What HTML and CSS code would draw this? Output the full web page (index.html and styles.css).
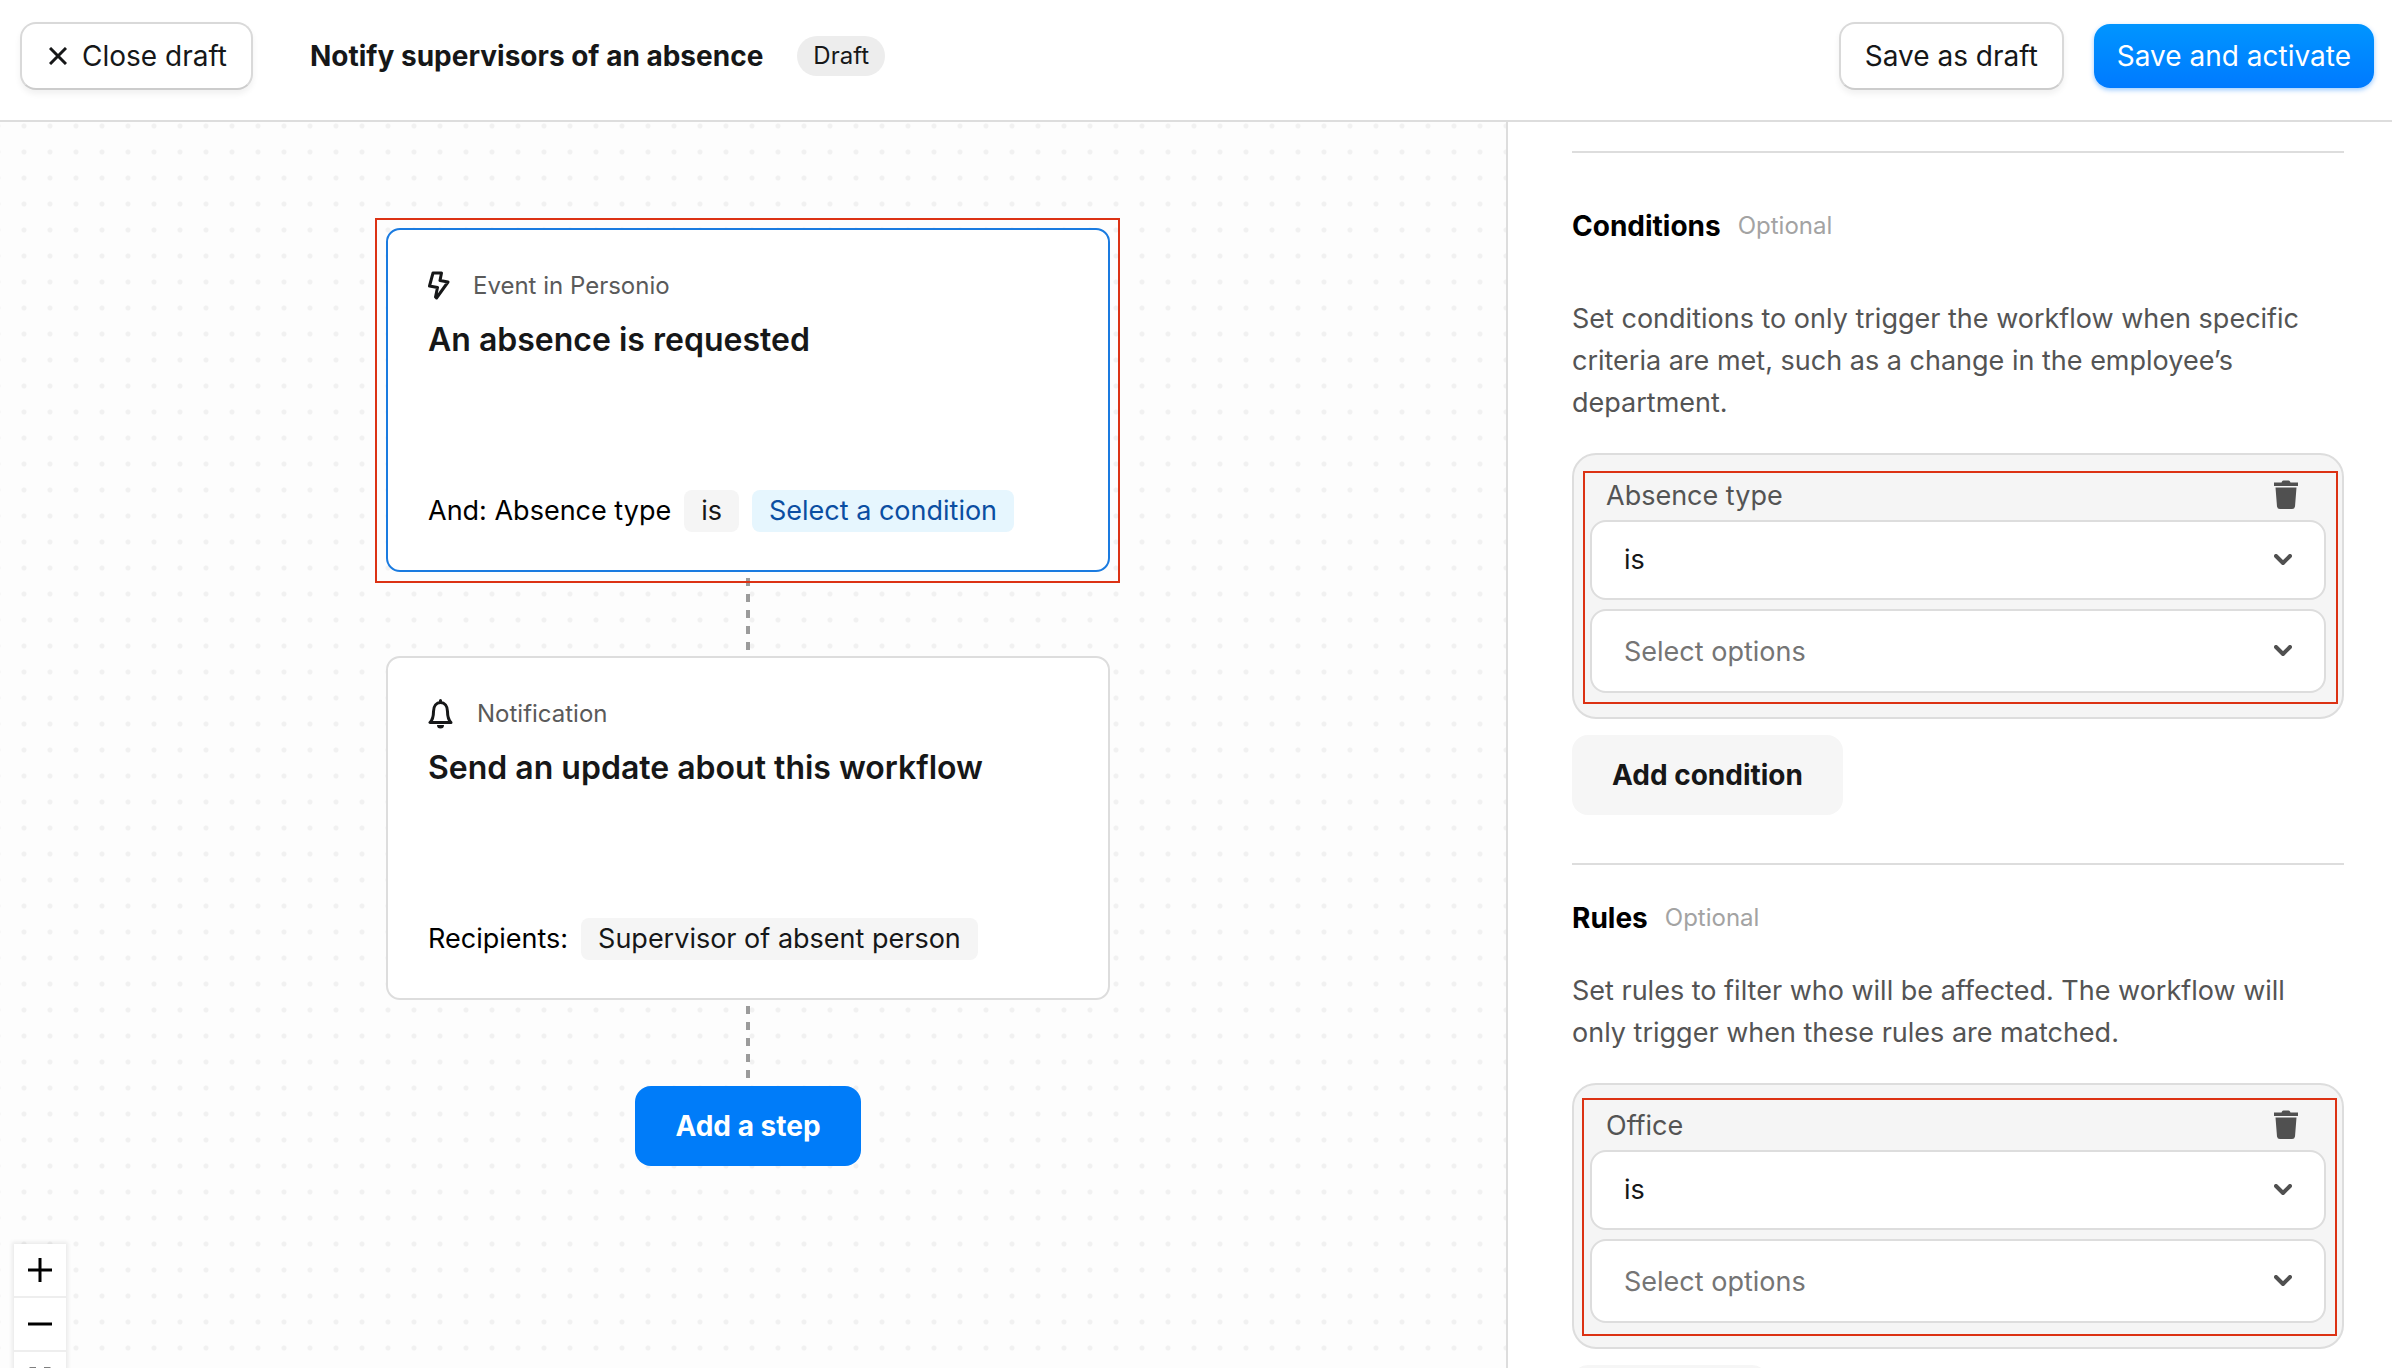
FILE: index.html
```html
<!DOCTYPE html>
<html lang="en">
<head>
<meta charset="utf-8">
<meta name="viewport" content="width=device-width, initial-scale=1">
<title>Notify supervisors of an absence</title>
<link rel="stylesheet" href="styles.css">
</head>
<body class="app">
<header class="topbar">
  <button class="btn btn-outline btn-close" type="button">
    <svg class="icon-close" viewBox="0 0 18 18" aria-hidden="true"><path d="M1 1l16 16M17 1L1 17"/></svg>
    Close draft
  </button>
  <h1 class="topbar-title">Notify supervisors of an absence</h1>
  <span class="status">Draft</span>
  <div class="topbar-actions">
    <button class="btn btn-outline" type="button">Save as draft</button>
    <button class="btn btn-primary" type="button">Save and activate</button>
  </div>
</header>

<div class="workspace">
  <main class="canvas">
    <div class="flow">
      <article class="card card-selected">
        <div class="card-kind">
          <svg class="icon-bolt" viewBox="0 0 22 30" aria-hidden="true"><path d="M5 2h8.500L12 9.500l8 1.500L8.500 27l-1-1 2-9.500-8-1.500z"/></svg>
          Event in Personio
        </div>
        <h2 class="card-title">An absence is requested</h2>
        <div class="card-detail">
          <span>And: Absence type</span>
          <span class="chip">is</span>
          <span class="chip chip-link">Select a condition</span>
        </div>
        <span class="marker marker-card"></span>
      </article>
      <div class="connector"></div>
      <article class="card">
        <div class="card-kind">
          <svg class="icon-bell" viewBox="0 0 26 30" aria-hidden="true"><path class="bell-body" d="M2 23.500h21c-2.500-2.500-3.500-5-3.500-11C19.500 7 16.500 3.500 12.500 3.500S5.500 7 5.500 12.500c0 6-1 8.500-3.500 11z"/><path class="bell-fill" d="M11 1.500a1.500 1.500 0 0 1 3 0V4h-3zM9 26h7a3.500 3.500 0 0 1-7 0z"/></svg>
          Notification
        </div>
        <h2 class="card-title">Send an update about this workflow</h2>
        <div class="card-detail">
          <span>Recipients:</span>
          <span class="chip">Supervisor of absent person</span>
        </div>
      </article>
      <div class="connector"></div>
      <button class="btn-step" type="button">Add a step</button>
    </div>
    <div class="zoom-controls">
      <button class="zoom-btn" type="button" aria-label="Zoom in"><svg viewBox="0 0 24 24"><path d="M0 12h24M12 0v24"/></svg></button>
      <button class="zoom-btn" type="button" aria-label="Zoom out"><svg viewBox="0 0 24 24"><path d="M0 12h24"/></svg></button>
      <button class="zoom-btn" type="button" aria-label="Fit view"><svg viewBox="0 0 24 24"><path d="M3 8V3h5M16 3h5v5M21 16v5h-5M8 21H3v-5"/></svg></button>
    </div>
  </main>

  <aside class="panel">
    <hr class="rule">
    <section class="section section-roomy">
      <div class="section-head">
        <h2 class="section-title">Conditions</h2>
        <span class="optional">Optional</span>
      </div>
      <p class="section-text">Set conditions to only trigger the workflow when specific criteria are met, such as a change in the employee’s department.</p>
      <div class="group">
        <div class="group-head">
          <label for="absence-operator">Absence type</label>
          <button class="btn-delete" type="button" aria-label="Remove condition"><svg viewBox="0 0 26 30"><path d="M9 1.500q.5-1 1.500-1h5q1 0 1.500 1l.5 1H25v3.500H1V2.500h7.500zM2.500 7.500h21L22 26.500a3 3 0 0 1-3 2.500H7a3 3 0 0 1-3-2.500z"/></svg></button>
        </div>
        <div class="field">
          <select class="select" id="absence-operator"><option>is</option></select>
          <svg class="chevron" viewBox="0 0 18 12" aria-hidden="true"><path d="M2 2l7 7 7-7"/></svg>
        </div>
        <div class="field">
          <select class="select select-empty" aria-label="Absence type options"><option>Select options</option></select>
          <svg class="chevron" viewBox="0 0 18 12" aria-hidden="true"><path d="M2 2l7 7 7-7"/></svg>
        </div>
        <span class="marker marker-condition"></span>
      </div>
      <button class="btn-add" type="button">Add condition</button>
    </section>
    <hr class="rule">
    <section class="section">
      <div class="section-head">
        <h2 class="section-title">Rules</h2>
        <span class="optional">Optional</span>
      </div>
      <p class="section-text">Set rules to filter who will be affected. The workflow will only trigger when these rules are matched.</p>
      <div class="group">
        <div class="group-head">
          <label for="office-operator">Office</label>
          <button class="btn-delete" type="button" aria-label="Remove rule"><svg viewBox="0 0 26 30"><path d="M9 1.500q.5-1 1.500-1h5q1 0 1.500 1l.5 1H25v3.500H1V2.500h7.500zM2.500 7.500h21L22 26.500a3 3 0 0 1-3 2.500H7a3 3 0 0 1-3-2.500z"/></svg></button>
        </div>
        <div class="field">
          <select class="select" id="office-operator"><option>is</option></select>
          <svg class="chevron" viewBox="0 0 18 12" aria-hidden="true"><path d="M2 2l7 7 7-7"/></svg>
        </div>
        <div class="field">
          <select class="select select-empty" aria-label="Office options"><option>Select options</option></select>
          <svg class="chevron" viewBox="0 0 18 12" aria-hidden="true"><path d="M2 2l7 7 7-7"/></svg>
        </div>
        <span class="marker marker-rule"></span>
      </div>
      <button class="btn-add" type="button" aria-label="Add rule"></button>
    </section>
  </aside>
</div>
</body>
</html>
```
FILE: styles.css
```css
*,
*::before,
*::after {
  box-sizing: border-box;
}

.app {
  display: flex;
  flex-direction: column;
  height: 100vh;
  margin: 0;
  background: #fff;
  color: #161718;
  font: 400 27px/42px Inter, "Liberation Sans", sans-serif;
}

h1, h2, p {
  margin: 0;
}

button, select {
  font: inherit;
  color: inherit;
  cursor: pointer;
}

svg {
  display: block;
  fill: none;
  flex: none;
}

/* Top bar */

.topbar {
  display: flex;
  align-items: center;
  flex: none;
  padding: 22px 18px 30px 20px;
  border-bottom: 2px solid #ddd;
}

.btn {
  height: 68px;
  padding: 0 24px;
  border: 2px solid #d9d9d9;
  border-radius: 16px;
  background: #fff;
  font-size: 28px;
  white-space: nowrap;
}

.btn-outline {
  border-bottom-color: #ccc;
  box-shadow: 0 4px 6px rgba(0, 0, 0, 0.06);
}

.btn-close {
  display: flex;
  align-items: center;
  gap: 15px;
}

.icon-close {
  width: 18px;
  height: 18px;
  margin-left: 3px;
  stroke: #161718;
  stroke-width: 3;
}

.btn-primary {
  height: 64px;
  padding: 0 23px;
  border: 0;
  background: linear-gradient(#0095ff, #007aff);
  color: #fff;
  box-shadow: 0 2px 5px rgba(0, 122, 255, 0.4);
}

.topbar-title {
  margin-left: 57px;
  font-size: 28px;
  font-weight: 650;
}

.status {
  margin-left: 34px;
  padding: 0 16px;
  border-radius: 20px;
  background: #ededed;
  font-size: 24px;
  line-height: 40px;
}

.topbar-actions {
  display: flex;
  align-items: center;
  gap: 30px;
  margin-left: auto;
}

/* Canvas */

.workspace {
  display: grid;
  grid-template-columns: minmax(0, 1fr) 886px;
  flex: 1;
  min-height: 0;
}

.canvas {
  position: relative;
  overflow: hidden;
  background: #fdfdfd radial-gradient(circle at 13px 13px, #f1f1f1 2px, transparent 3px) 11px -9px / 26px 26px;
}

.flow {
  display: flex;
  flex-direction: column;
  align-items: center;
  padding: 106px 10px 0 0;
}

.card {
  position: relative;
  display: flex;
  flex-direction: column;
  width: 724px;
  min-height: 344px;
  padding: 41px 40px 38px;
  border: 2px solid #ddd;
  border-radius: 14px;
  background: #fff;
}

.card-selected {
  border-color: #1a7be0;
}

.card-kind {
  display: flex;
  align-items: center;
  gap: 23px;
  color: #5a5a5a;
  font-size: 24px;
  line-height: 30px;
}

.icon-bolt {
  width: 22px;
  height: 30px;
  stroke: #161718;
  stroke-width: 3;
  stroke-linejoin: round;
}

.icon-bell {
  width: 26px;
  height: 30px;
}

.bell-body {
  stroke: #161718;
  stroke-width: 3;
  stroke-linejoin: round;
}

.bell-fill {
  fill: #161718;
}

.card-title {
  margin-top: 19px;
  font-size: 32px;
  font-weight: 600;
  line-height: 40px;
}

.card-detail {
  display: flex;
  gap: 13px;
  margin-top: auto;
  color: #000;
}

.chip {
  padding: 0 17px;
  border-radius: 8px;
  background: #f5f5f5;
  color: #161718;
}

.chip-link {
  background: #e6f6fe;
  color: #0b4ea2;
}

.connector {
  width: 4px;
  height: 72px;
  margin: 6px 0;
  background: repeating-linear-gradient(#9b9b9b 0 8px, transparent 8px 16px);
}

.btn-step {
  height: 80px;
  margin-top: 2px;
  padding: 0 40px;
  border: 0;
  border-radius: 16px;
  background: #007cf9;
  color: #fff;
  font-size: 28px;
  font-weight: 650;
}

.zoom-controls {
  position: absolute;
  top: 1122px;
  left: 14px;
  display: flex;
  flex-direction: column;
  box-shadow: 0 0 4px 2px rgba(0, 0, 0, 0.08);
}

.zoom-btn {
  display: grid;
  place-items: center;
  width: 52px;
  height: 54px;
  padding: 0;
  border: 0;
  border-bottom: 2px solid #eee;
  background: #fff;
}

.zoom-btn svg {
  width: 24px;
  height: 24px;
  stroke: #000;
  stroke-width: 3;
}

/* Settings panel */

.panel {
  overflow-y: auto;
  padding: 29px 48px 48px 64px;
  border-left: 2px solid #ddd;
  scrollbar-width: none;
}

.rule {
  height: 2px;
  margin: 0;
  border: 0;
  background: #ddd;
}

.section {
  padding: 32px 0 48px;
}

.section-roomy {
  padding-top: 52px;
}

.section-head {
  display: flex;
  gap: 17px;
  margin-bottom: 31px;
}

.section-roomy .section-head {
  margin-bottom: 51px;
}

.section-title {
  color: #000;
  font-size: 28px;
  font-weight: 650;
}

.optional {
  color: #a3a3a3;
  font-size: 24px;
}

.section-text {
  margin-bottom: 29px;
  color: #545454;
}

.group {
  position: relative;
  display: flex;
  flex-direction: column;
  padding: 20px 16px 24px;
  border: 2px solid #ddd;
  border-radius: 24px;
  background: #f5f5f5;
}

.group-head {
  display: flex;
  align-items: center;
  justify-content: space-between;
  margin-bottom: 3px;
  padding: 0 27px 0 16px;
  color: #545454;
}

.btn-delete {
  padding: 0 0 3px;
  border: 0;
  background: none;
}

.btn-delete svg {
  width: 26px;
  height: 30px;
  fill: #505050;
}

.field {
  display: grid;
  align-items: center;
}

.field + .field {
  margin-top: 9px;
}

.select,
.chevron {
  grid-area: 1 / 1;
}

.select {
  appearance: none;
  width: 100%;
  height: 80px;
  padding: 0 80px 0 32px;
  border: 2px solid #ddd;
  border-radius: 16px;
  background: #fff;
}

.select-empty {
  height: 84px;
  padding-top: 2px;
  color: #757575;
}

.chevron {
  justify-self: end;
  width: 18px;
  height: 12px;
  margin-right: 34px;
  stroke: #505050;
  stroke-width: 4;
  stroke-linecap: round;
  stroke-linejoin: round;
  pointer-events: none;
}

.btn-add {
  min-width: 196px;
  height: 80px;
  margin-top: 16px;
  padding: 0 40px;
  border: 0;
  border-radius: 16px;
  background: #f6f6f6;
  font-size: 28px;
  font-weight: 650;
}

/* Red callout frames drawn over highlighted areas */

.marker {
  position: absolute;
  border: 2px solid #dc3214;
  pointer-events: none;
}

.marker-card {
  inset: -12px -12px -13px -13px;
}

.marker-condition {
  inset: 16px 4px 13px 9px;
}

.marker-rule {
  inset: 13px 5px 11px 8px;
}
```
